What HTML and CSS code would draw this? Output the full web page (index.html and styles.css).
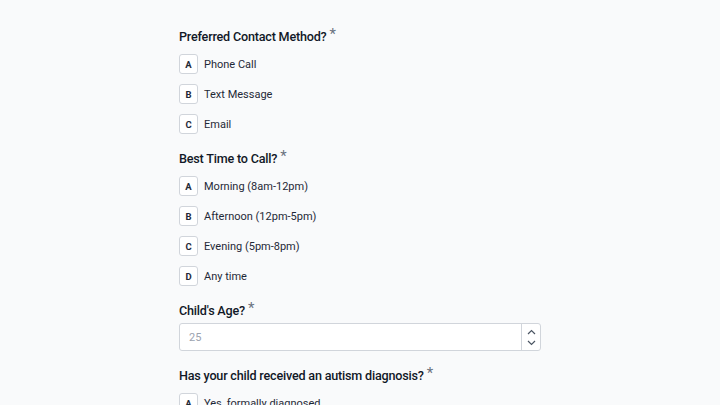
FILE: index.html
```html
<!DOCTYPE html>
<html lang="en">
<head>
<meta charset="utf-8">
<title>Form</title>
<link rel="stylesheet" href="styles.css">
</head>
<body>
<main class="form">
  <section class="question">
    <h2 class="q-title">Preferred Contact Method?<span class="req">*</span></h2>
    <div class="options">
      <div class="option"><span class="key">A</span><span class="label">Phone Call</span></div>
      <div class="option"><span class="key">B</span><span class="label">Text Message</span></div>
      <div class="option"><span class="key">C</span><span class="label">Email</span></div>
    </div>
  </section>
  <section class="question">
    <h2 class="q-title">Best Time to Call?<span class="req">*</span></h2>
    <div class="options">
      <div class="option"><span class="key">A</span><span class="label">Morning (8am-12pm)</span></div>
      <div class="option"><span class="key">B</span><span class="label">Afternoon (12pm-5pm)</span></div>
      <div class="option"><span class="key">C</span><span class="label">Evening (5pm-8pm)</span></div>
      <div class="option"><span class="key">D</span><span class="label">Any time</span></div>
    </div>
  </section>
  <section class="question">
    <h2 class="q-title q-title-tight">Child's Age?<span class="req">*</span></h2>
    <div class="number-input">
      <span class="value">25</span>
      <span class="stepper">
        <svg width="9" height="6" viewBox="0 0 9 6"><path d="M1 5 L4.5 1.5 L8 5" fill="none" stroke="#4b5563" stroke-width="1.2"/></svg>
        <svg width="9" height="6" viewBox="0 0 9 6"><path d="M1 1 L4.5 4.5 L8 1" fill="none" stroke="#4b5563" stroke-width="1.2"/></svg>
      </span>
    </div>
  </section>
  <section class="question">
    <h2 class="q-title">Has your child received an autism diagnosis?<span class="req">*</span></h2>
    <div class="options">
      <div class="option"><span class="key">A</span><span class="label">Yes, formally diagnosed</span></div>
      <div class="option"><span class="key">B</span><span class="label">No</span></div>
    </div>
  </section>
</main>
</body>
</html>
```
FILE: styles.css
```css
html, body {
  margin: 0;
  padding: 0;
  background: #f9fafb;
  font-family: Roboto, "Liberation Sans", sans-serif;
  color: #1f2937;
}
.form {
  width: 362px;
  margin: 0 auto;
  padding-top: 27px;
  display: flex;
  flex-direction: column;
  gap: 15px;
}
.q-title {
  margin: 0 0 7px 0;
  font-size: 12.6px;
  line-height: 20px;
  font-weight: 500;
  letter-spacing: -0.2px;
  color: #111827;
}
.q-title-tight {
  margin-bottom: 2px;
}
.req {
  display: inline-block;
  margin-left: 3px;
  font-size: 15px;
  font-weight: 400;
  color: #6b7280;
  vertical-align: 2px;
  line-height: 10px;
  letter-spacing: 0;
}
.options {
  display: flex;
  flex-direction: column;
  gap: 10px;
}
.option {
  display: flex;
  align-items: center;
  gap: 6px;
  height: 20px;
}
.key {
  box-sizing: border-box;
  width: 19px;
  height: 20px;
  display: flex;
  align-items: center;
  justify-content: center;
  background: #ffffff;
  border: 1px solid #d1d5db;
  border-radius: 3px;
  font-size: 9.5px;
  font-weight: 700;
  color: #1f2937;
}
.label {
  font-size: 11px;
  color: #1f2937;
}
.number-input {
  box-sizing: border-box;
  height: 28px;
  display: flex;
  align-items: stretch;
  background: #ffffff;
  border: 1px solid #d1d5db;
  border-radius: 3px;
}
.value {
  flex: 1;
  display: flex;
  align-items: center;
  padding-left: 9px;
  font-size: 11px;
  color: #9ca3af;
}
.stepper {
  width: 18px;
  border-left: 1px solid #d1d5db;
  display: flex;
  flex-direction: column;
  align-items: center;
  justify-content: center;
  gap: 5px;
}
.stepper svg { display: block; }
```
